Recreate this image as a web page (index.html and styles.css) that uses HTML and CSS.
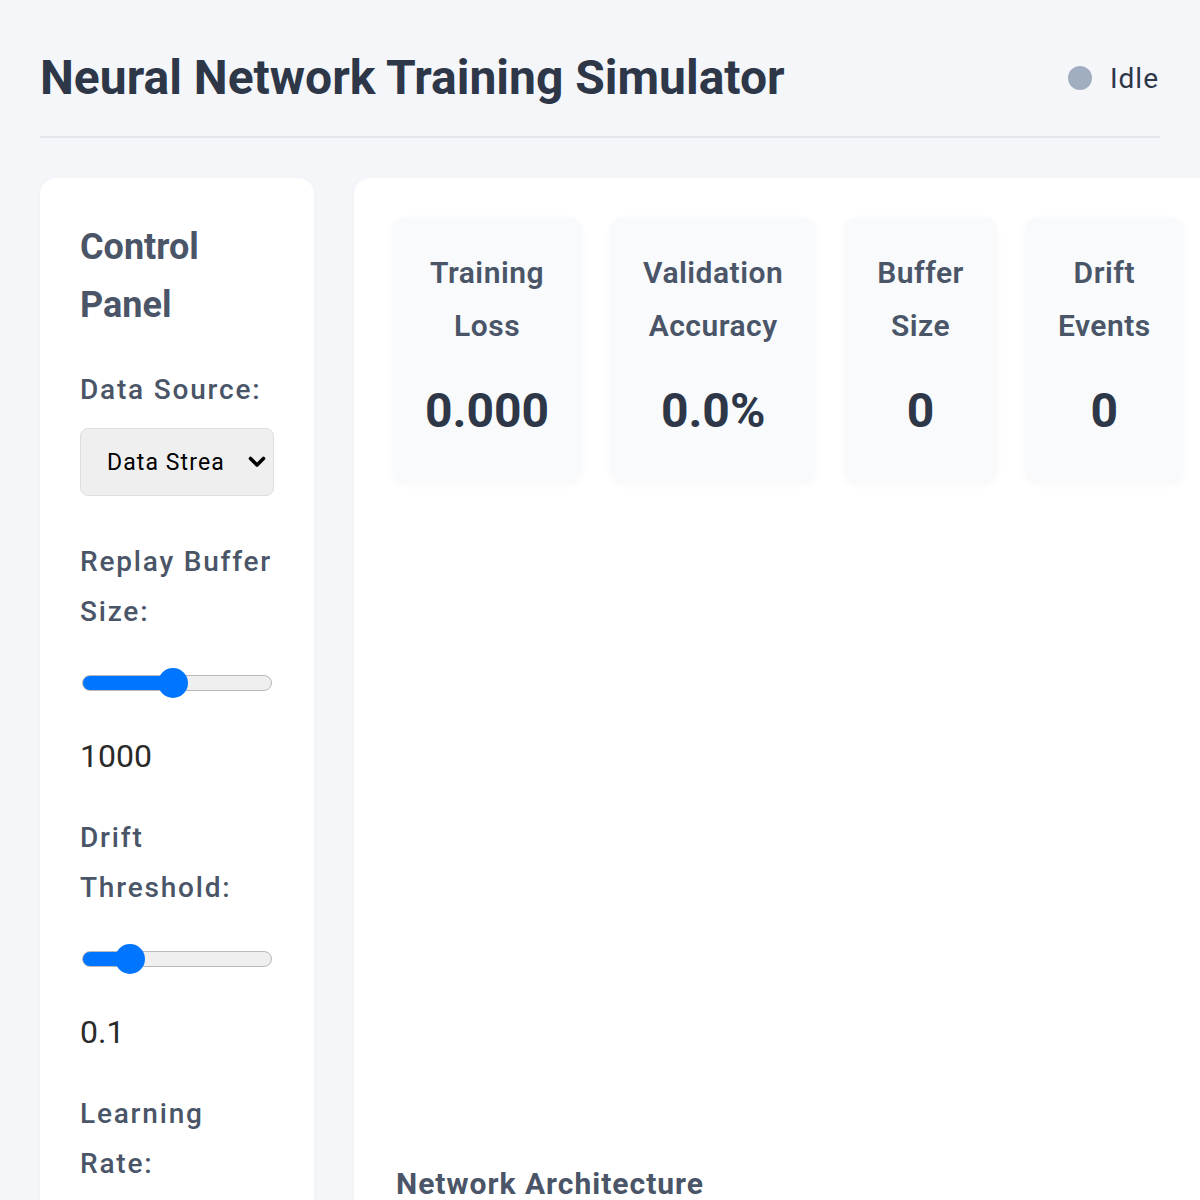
FILE: index.html
```html
<!DOCTYPE html>
<html lang="en">
<head>
    <meta charset="UTF-8">
    <meta name="viewport" content="width=device-width, initial-scale=1.0">
    <title>Neural Network Training Simulator</title>
    <link rel="stylesheet" href="styles.css">
</head>
<body>
    <div class="container">
        <!-- Header -->
        <header class="header">
            <h1>Neural Network Training Simulator</h1>
            <div class="status">
                <span class="status-dot"></span>
                <span class="status-text">Idle</span>
            </div>
        </header>

        <div class="layout">
            <!-- Control panel -->
            <aside class="sidebar">
                <h2>Control Panel</h2>

                <div class="control-group select-group">
                    <label for="data-source">Data Source:</label>
                    <div class="select-wrap">
                        <select id="data-source" class="select">
                            <option>Data Stream A</option>
                            <option>Data Stream B</option>
                            <option>Concept Drift</option>
                        </select>
                        <svg class="select-arrow" width="18" height="12" viewBox="0 0 18 12">
                            <path d="M2.5 2.5 L9 9 L15.5 2.5" fill="none" stroke="#000" stroke-width="3.6" stroke-linecap="round" stroke-linejoin="round"/>
                        </svg>
                    </div>
                </div>

                <div class="control-group">
                    <label for="buffer-size">Replay Buffer Size:</label>
                    <input type="range" id="buffer-size" class="slider" min="100" max="2000" value="1000" style="--p: 0.474">
                    <span class="value">1000</span>
                </div>

                <div class="control-group">
                    <label for="drift-threshold">Drift Threshold:</label>
                    <input type="range" id="drift-threshold" class="slider" min="0" max="0.5" step="0.01" value="0.1" style="--p: 0.2">
                    <span class="value">0.1</span>
                </div>

                <div class="control-group">
                    <label for="learning-rate">Learning Rate:</label>
                    <input type="range" id="learning-rate" class="slider" min="0.001" max="0.1" step="0.001" value="0.01" style="--p: 0.09">
                    <span class="value">0.01</span>
                </div>
            </aside>

            <!-- Main area -->
            <main class="main-panel">
                <div class="stats">
                    <div class="stat-card">
                        <div class="stat-label">Training Loss</div>
                        <div class="stat-value">0.000</div>
                    </div>
                    <div class="stat-card">
                        <div class="stat-label">Validation Accuracy</div>
                        <div class="stat-value">0.0%</div>
                    </div>
                    <div class="stat-card">
                        <div class="stat-label">Buffer Size</div>
                        <div class="stat-value">0</div>
                    </div>
                    <div class="stat-card">
                        <div class="stat-label">Drift Events</div>
                        <div class="stat-value">0</div>
                    </div>
                </div>

                <div class="chart-container"></div>

                <h3>Network Architecture</h3>
                <div class="network-view"></div>
            </main>
        </div>
    </div>
</body>
</html>
```

FILE: styles.css
```css
/* Base */
html, body {
    overflow-x: hidden;
}

body {
    font-family: 'Roboto', 'Liberation Sans', sans-serif;
    background: #f4f6fa;
    color: #2d3748;
    margin: 0;
    padding: 0;
}

.container {
    padding: 49px 40px 40px;
}

/* Header */
.header {
    display: flex;
    justify-content: space-between;
    align-items: center;
    width: 1120px;
    padding-bottom: 29px;
    border-bottom: 2px solid #e2e6ec;
    margin-bottom: 40px;
}

.header h1 {
    margin: 0;
    font-size: 48px;
    line-height: 58px;
    font-weight: 700;
    color: #2d3748;
}

.status {
    display: flex;
    align-items: center;
    gap: 18px;
}

.status-dot {
    width: 24px;
    height: 24px;
    border-radius: 50%;
    background: #a0aec0;
}

.status-text {
    font-size: 28px;
    letter-spacing: 1px;
    margin-right: 1px;
    color: #2d3748;
}

/* Layout */
.layout {
    display: grid;
    grid-template-columns: 274px auto;
    gap: 40px;
    align-items: start;
}

/* Control panel */
.sidebar {
    background: #fff;
    border-radius: 16px;
    padding: 40px 40px 60px;
    box-shadow: 0 2px 6px rgba(0, 0, 0, 0.03);
}

.sidebar h2 {
    margin: 0 0 31px;
    font-size: 36px;
    line-height: 58px;
    font-weight: 700;
    color: #4a5568;
}

.control-group {
    margin-bottom: 33px;
}

.control-group.select-group {
    margin-bottom: 41px;
}

.control-group label {
    display: block;
    font-size: 28px;
    line-height: 50px;
    font-weight: 500;
    letter-spacing: 1.8px;
    color: #4a5568;
    margin-bottom: 13px;
}

.select-wrap {
    position: relative;
}

.select {
    -webkit-appearance: none;
    appearance: none;
    display: block;
    width: 100%;
    height: 68px;
    padding: 0 48px 0 26px;
    font-family: 'Roboto', 'Liberation Sans', sans-serif;
    font-size: 23px;
    letter-spacing: 1.1px;
    color: #000;
    background-color: #efefef;
    border: 1px solid #dedede;
    border-radius: 8px;
}

.select-arrow {
    position: absolute;
    right: 8px;
    top: 28px;
    pointer-events: none;
}

.slider {
    -webkit-appearance: none;
    appearance: none;
    display: block;
    width: 190px;
    height: 16px;
    margin: 38px 0 41px 2px;
    border-radius: 8px;
    border: 1px solid #b8b8b8;
    box-sizing: border-box;
    background: linear-gradient(to right,
        #0075ff calc(15px + var(--p) * (100% - 30px)),
        #efefef calc(15px + var(--p) * (100% - 30px)));
}

.slider::-webkit-slider-thumb {
    -webkit-appearance: none;
    width: 30px;
    height: 30px;
    border-radius: 50%;
    background: #0075ff;
    border: none;
}

.value {
    display: block;
    font-size: 32px;
    line-height: 48px;
    color: #2a2a2a;
}

/* Main area */
.main-panel {
    background: #fff;
    border-radius: 16px;
    padding: 39px 40px 40px 38px;
    box-shadow: 0 2px 6px rgba(0, 0, 0, 0.03);
}

.stats {
    display: flex;
    gap: 28px;
}

.stat-card {
    width: min-content;
    background: #f8fafc;
    border-radius: 14px;
    padding: 29px 33px 34px;
    text-align: center;
    box-shadow: 0 2px 8px rgba(0, 0, 0, 0.03);
}

.stat-label {
    font-size: 30px;
    line-height: 53px;
    font-weight: 600;
    letter-spacing: 0.5px;
    color: #4a5568;
    margin-bottom: 20px;
}

.stat-value {
    font-size: 48px;
    line-height: 77px;
    font-weight: 700;
    color: #2d3748;
}

.chart-container {
    height: 600px;
    margin: 38px 0 39px;
}

.main-panel h3 {
    margin: 0;
    padding-left: 4px;
    font-size: 30px;
    line-height: 48px;
    font-weight: 700;
    letter-spacing: 1px;
    color: #4a5568;
}

.network-view {
    height: 400px;
}
```
